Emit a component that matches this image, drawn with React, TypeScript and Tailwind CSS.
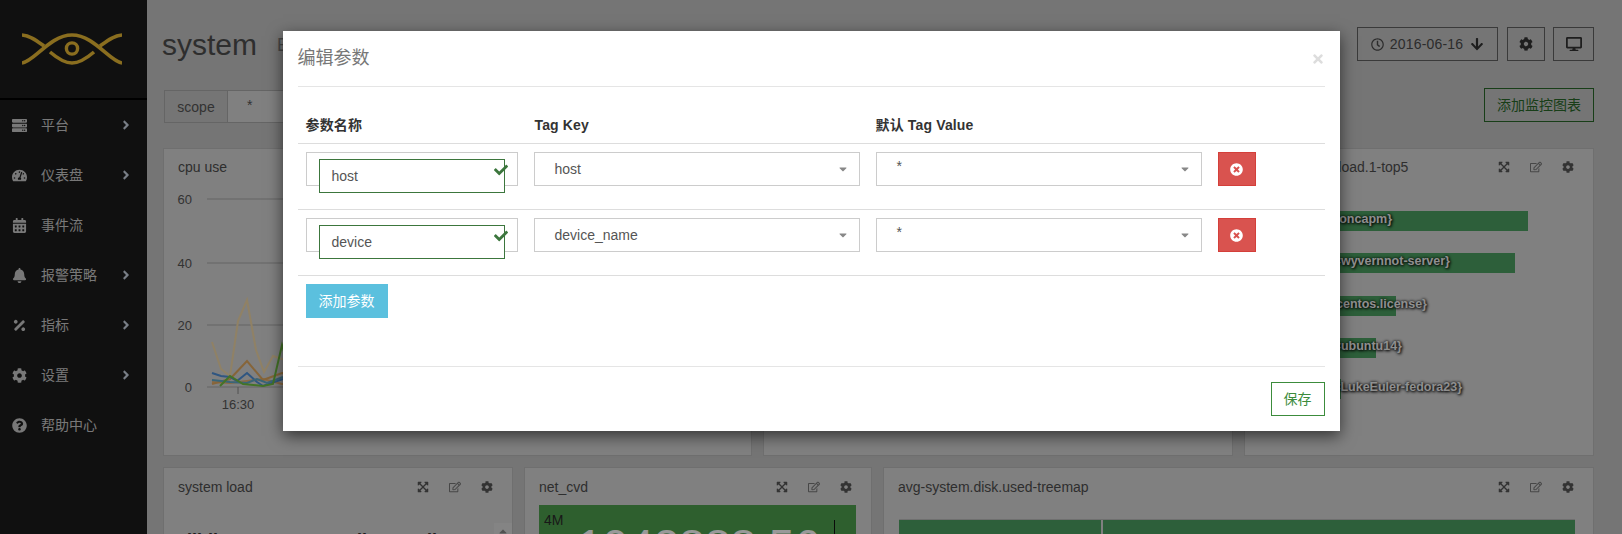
import type { ReactNode } from 'react';
import {
  FaAngleRight,
  FaArrowDown,
  FaBell,
  FaCalendarAlt,
  FaCaretDown,
  FaCheck,
  FaCog,
  FaDesktop,
  FaExpandArrowsAlt,
  FaPercentage,
  FaQuestionCircle,
  FaRegClock,
  FaRegEdit,
  FaServer,
  FaTachometerAlt,
  FaTimes,
  FaTimesCircle,
} from 'react-icons/fa';

const nav = [
  { label: '平台', icon: <FaServer />, arrow: true },
  { label: '仪表盘', icon: <FaTachometerAlt />, arrow: true },
  { label: '事件流', icon: <FaCalendarAlt />, arrow: false },
  { label: '报警策略', icon: <FaBell />, arrow: true },
  { label: '指标', icon: <FaPercentage />, arrow: true },
  { label: '设置', icon: <FaCog />, arrow: true },
  { label: '帮助中心', icon: <FaQuestionCircle />, arrow: false },
];

const bars = [
  { label: '{host=oncapm}', width: 'w-[269px]', right: 'right-[187px]', gap: 'mt-[23px]' },
  { label: '{host=wyvernnot-server}', width: 'w-[256px]', right: 'right-[129px]', gap: 'mt-[22px]' },
  { label: '{host=centos.license}', width: 'w-[137px]', right: 'right-[152px]', gap: 'mt-[23px]' },
  { label: '{host=ubuntu14}', width: 'w-[117px]', right: 'right-[177px]', gap: 'mt-[22px]' },
  { label: '{host=LukeEuler-fedora23}', width: 'w-[82px]', right: 'right-[117px]', gap: 'mt-[21px]' },
];

const params = [
  { name: 'host', tagKey: 'host' },
  { name: 'device', tagKey: 'device_name' },
];

const series = [
  { color: '#f0d8a8', points: '48,154 57,181 66,188 74,133 83,112 92,162 100,184 109,168 118,171 200,180' },
  { color: '#e8b070', points: '48,194 66,195 83,193 99,191 118,196 200,192' },
  { color: '#e0a860', points: '48,196 66,191 83,173 99,192 118,185 200,190' },
  { color: '#4f8fd8', points: '48,185 57,188 66,189 73,193 83,185 93,194 99,198 119,191' },
  { color: '#60a8c8', points: '48,192 66,194 83,195 93,191 103,195 119,189' },
  { color: '#70c040', points: '56,198 66,188 79,196 99,198 109,196 118,157 125,180' },
];

function CardTools() {
  return (
    <div className="ml-auto mr-[19px] flex items-center gap-[20px] text-[12px] text-[#555]">
      <FaExpandArrowsAlt />
      <FaRegEdit className="text-[#777]" />
      <FaCog />
    </div>
  );
}

function Card({
  title,
  titleHeight,
  tools = true,
  className,
  children,
}: {
  title: string;
  titleHeight: string;
  tools?: boolean;
  className: string;
  children?: ReactNode;
}) {
  return (
    <div className={`relative overflow-hidden border border-[#b9b9b9] bg-[#d5d5d5] ${className}`}>
      <div className={`flex items-center pl-[14px] text-[14px] text-[#4e4e4e] ${titleHeight}`}>
        <span>{title}</span>
        {tools && <CardTools />}
      </div>
      {children}
    </div>
  );
}

function CpuChart() {
  return (
    <svg viewBox="0 0 587 260" className="mt-[3px] block h-[260px] w-[587px]">
      {[
        { label: '60', y: 11 },
        { label: '40', y: 75 },
        { label: '20', y: 137 },
        { label: '0', y: 199 },
      ].map(t => (
        <g key={t.label}>
          <line x1="43" x2="580" y1={t.y} y2={t.y} stroke="#a8a8a8" />
          <text x="28" y={t.y + 5} textAnchor="end" fontSize="13" fill="#555">
            {t.label}
          </text>
        </g>
      ))}
      <line x1="74" x2="74" y1="199" y2="206" stroke="#888" />
      <text x="74" y="221" textAnchor="middle" fontSize="13" fill="#555">
        16:30
      </text>
      {series.map(s => (
        <polyline key={s.color} points={s.points} fill="none" stroke={s.color} strokeWidth="2" />
      ))}
    </svg>
  );
}

function SelectBox({ value, width }: { value: string; width: string }) {
  return (
    <div className={`flex h-[34px] items-center border border-[#ccc] pl-[20px] pr-[10px] text-[14px] text-[#555] ${width}`}>
      <span className={value === '*' ? '-mt-[6px]' : ''}>{value}</span>
      <FaCaretDown className="ml-auto text-[12px] text-[#888]" />
    </div>
  );
}

function ParamRow({ name, tagKey }: { name: string; tagKey: string }) {
  return (
    <div className="flex h-[66px] items-start gap-[16px] border-b border-[#ddd] pl-[8px] pt-[8px]">
      <div className="relative h-[34px] w-[212px] border border-[#ccc]">
        <div className="absolute left-[12px] top-[6px] flex h-[34px] w-[186px] items-center border border-[#3c763d] bg-white pl-[12px] text-[14px] text-[#555]">
          {name}
        </div>
        <FaCheck className="absolute right-[9px] top-[10px] text-[14px] text-[#3c763d]" />
      </div>
      <SelectBox value={tagKey} width="w-[326px]" />
      <SelectBox value="*" width="w-[326px]" />
      <div className="flex h-[34px] w-[38px] items-center justify-center border border-[#d43f3a] bg-[#d9534f] text-[13px] text-white">
        <FaTimesCircle />
      </div>
    </div>
  );
}

function ParamModal() {
  return (
    <div className="absolute inset-0 flex justify-center bg-black/40">
      <div className="mt-[31px] flex h-[400px] w-[1057px] flex-col bg-white px-[15px] shadow-[0_5px_15px_rgba(0,0,0,0.6)]">
        <div className="flex h-[56px] flex-none items-center border-b border-[#e5e5e5] text-[18px] text-[#777]">
          <span>编辑参数</span>
          <FaTimes className="ml-auto text-[14px] text-[#ddd]" />
        </div>
        <div className="mt-[1px] flex h-[56px] flex-none items-end border-b border-[#ddd] pb-[7px] pl-[8px] text-[14px] font-bold tracking-[0.15px] text-[#333]">
          <span className="w-[229px]">参数名称</span>
          <span className="w-[341px]">Tag Key</span>
          <span>默认 Tag Value</span>
        </div>
        {params.map(p => (
          <ParamRow key={p.name} name={p.name} tagKey={p.tagKey} />
        ))}
        <div className="ml-[8px] mt-[8px] flex h-[34px] w-[82px] flex-none items-center justify-center bg-[#5bc0de] text-[14px] text-white">
          添加参数
        </div>
        <div className="mt-[48px] flex flex-1 items-start justify-end border-t border-[#e5e5e5] pt-[15px]">
          <div className="flex h-[34px] w-[54px] items-center justify-center border border-[#3c8c3c] text-[14px] text-[#3c8c3c]">
            保存
          </div>
        </div>
      </div>
    </div>
  );
}

export default function App() {
  return (
    <div
      className="relative flex h-[534px] w-[1622px] overflow-hidden bg-[#c3c3c3]"
      style={{ fontFamily: '"Liberation Sans", "Noto Sans CJK SC", sans-serif' }}
    >
      {/* sidebar */}
      <aside className="w-[147px] flex-none bg-[#1c1c1c]">
        <div className="flex h-[100px] items-start border-b-2 border-black pl-[22px] pt-[33px]">
          <svg viewBox="0 0 100 32" className="h-[32px] w-[100px]" fill="none" stroke="#e6b735" strokeWidth="3.6">
            <path d="M0 30 C12 29 28 2 50 2 S88 29 100 30" />
            <path d="M0 2 C8 2.5 15 8 22 13" />
            <path d="M100 2 C92 2.5 85 8 78 13" />
            <path d="M28 19 C35 25 42 30 50 30 S65 25 72 19" />
            <circle cx="50" cy="15.5" r="5.6" strokeWidth="3.4" />
          </svg>
        </div>
        {nav.map(item => (
          <div key={item.label} className="flex h-[50px] items-center pl-[12px] pr-[14px] text-[14px] text-[#c8c8c8]">
            <span className="flex w-[15px] justify-center text-[15px]">{item.icon}</span>
            <span className="ml-[14px]">{item.label}</span>
            {item.arrow && <FaAngleRight className="ml-auto text-[#c9d3e0]" />}
          </div>
        ))}
      </aside>

      {/* main */}
      <main className="min-w-0 flex-1 pl-[16px] pr-[28px] pt-[27px]">
        <div className="flex h-[34px] items-center">
          <h1 className="-ml-px text-[30px] text-[#4e4e4e]">system</h1>
          <span className="ml-[20px] mt-[2px] text-[18px] text-[#777]">E</span>
          <div className="ml-auto flex gap-[8px] text-[14px] text-[#4a4a4a]">
            <div className="flex h-[34px] w-[141px] items-center justify-center gap-[6px] border border-[#616161] tracking-[0.2px]">
              <FaRegClock className="text-[13px]" />
              <span>2016-06-16</span>
              <FaArrowDown className="ml-[1px] text-[14px] text-[#333]" />
            </div>
            <div className="ml-px flex h-[34px] w-[38px] items-center justify-center border border-[#616161] text-[#333]">
              <FaCog className="text-[14px]" />
            </div>
            <div className="flex h-[34px] w-[41px] items-center justify-center border border-[#616161] text-[#333]">
              <FaDesktop className="text-[16px]" />
            </div>
          </div>
        </div>

        <div className="mt-[27px] flex items-start justify-between">
          <div className="ml-px mt-[2px] flex h-[33px] text-[14px] text-[#555]">
            <span className="flex w-[64px] items-center justify-center border border-[#a9a9a9] bg-[#c3c3c3] pt-px">scope</span>
            <span className="w-[160px] border border-l-0 border-[#a9a9a9] bg-[#d5d5d5] pl-[19px] pt-[4px]">*</span>
          </div>
          <div className="flex h-[34px] w-[110px] items-center justify-center border border-[#286828] text-[14px] text-[#286828]">
            添加监控图表
          </div>
        </div>

        <div className="mt-[25px] flex gap-[11px]">
          <Card title="cpu use" titleHeight="h-[36px]" tools={false} className="h-[308px] w-[589px]">
            <CpuChart />
          </Card>
          <Card title="" titleHeight="h-[36px]" tools={false} className="h-[308px] w-[470px]" />
          <Card title="max-system.load.1-top5" titleHeight="h-[36px]" className="h-[308px] w-[350px]">
            <div className="pl-[14px] pt-[3px]">
              {bars.map(b => (
                <div key={b.label} className={`relative h-[20px] w-[320px] ${b.gap}`}>
                  <div className={`h-[20px] bg-[#4b9f61] ${b.width}`} />
                  <span
                    className={`absolute -top-px whitespace-nowrap text-[12.5px] font-bold text-[#eee] [text-shadow:1px_1px_3px_#000,0_0_3px_#000] ${b.right}`}
                  >
                    {b.label}
                  </span>
                </div>
              ))}
            </div>
          </Card>
        </div>

        <div className="mt-[11px] flex gap-[11px]">
          <Card title="system load" titleHeight="h-[38px]" className="h-[120px] w-[350px]">
            <div className="flex gap-[8px] pl-[17px] pt-[25px] text-[18px] font-bold leading-none text-[#333]">
              <span>dlldk</span>
              <span className="ml-[120px]">dl</span>
              <span className="ml-[52px]">ll</span>
            </div>
            <div className="absolute right-0 top-[55px] h-[64px] w-[18px] bg-[#dcdcdc]">
              <FaCaretDown className="mx-auto mt-[3px] rotate-180 text-[12px] text-[#888]" />
            </div>
          </Card>
          <Card title="net_cvd" titleHeight="h-[38px]" className="h-[120px] w-[348px]">
            <div className="relative -mt-px ml-[14px] mr-[15px] h-[80px] overflow-hidden bg-[#4e9f4e]">
              <span className="absolute left-[5px] top-[5px] text-[14px] text-[#2a2a2a]">4M</span>
              <span className="absolute left-[38px] top-[15px] text-[46px] font-light leading-[52px] text-white">1042888.56</span>
              <div className="absolute right-[21px] top-[15px] h-[65px] w-px bg-[#111]" />
            </div>
          </Card>
          <Card title="avg-system.disk.used-treemap" titleHeight="h-[38px]" className="h-[120px] w-[711px]">
            <div className="ml-[15px] mr-[18px] mt-[13px] flex h-[60px] border-t border-[#b9b9b9]">
              <div className="w-[202px] bg-[#4b9f61]" />
              <div className="ml-[2px] flex-1 bg-[#4b9f61]" />
            </div>
          </Card>
        </div>
      </main>

      <ParamModal />
    </div>
  );
}
